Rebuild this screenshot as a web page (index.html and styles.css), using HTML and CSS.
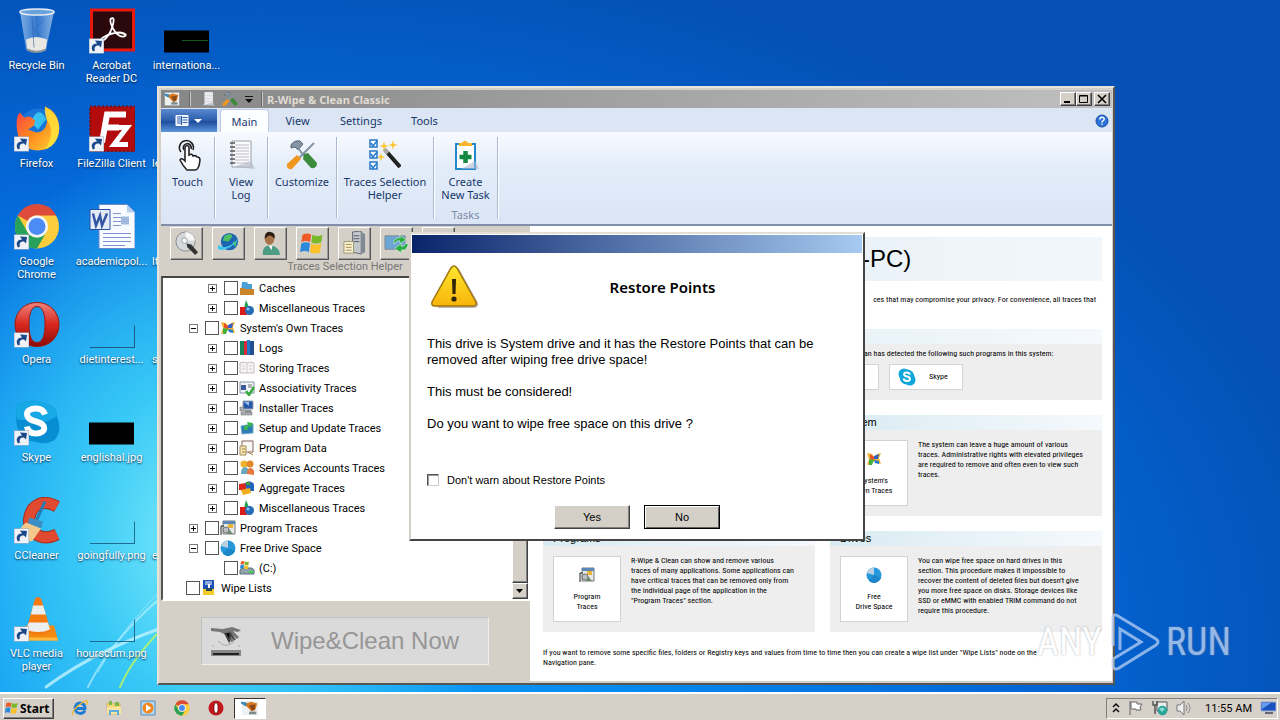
FILE: index.html
```html
<!DOCTYPE html>
<html lang="en">
<head>
<meta charset="utf-8">
<title>R-Wipe &amp; Clean Classic</title>
<link rel="stylesheet" href="styles.css">
</head>
<body>
<svg class="defs" aria-hidden="true">
  <defs>
    <linearGradient id="gFire" x1="0" y1="0" x2="1" y2="1"><stop offset="0" stop-color="#ff3b4e"/><stop offset=".5" stop-color="#ff8a1c"/><stop offset="1" stop-color="#ffd83a"/></linearGradient>
    <linearGradient id="gRed" x1="0" y1="0" x2="0" y2="1"><stop offset="0" stop-color="#f0847c"/><stop offset=".5" stop-color="#d8281e"/><stop offset="1" stop-color="#8c0a08"/></linearGradient>
    <linearGradient id="gWarn" x1="0" y1="0" x2="0" y2="1"><stop offset="0" stop-color="#ffe62e"/><stop offset="1" stop-color="#f8b40a"/></linearGradient>
    <linearGradient id="gBin" x1="0" y1="0" x2="1" y2="0"><stop offset="0" stop-color="#9cc4ea"/><stop offset=".5" stop-color="#3f7fd0"/><stop offset="1" stop-color="#a8caec"/></linearGradient>
    <symbol id="shortcut" viewBox="0 0 15 15"><path d="M0 0h15v15H0z" fill="#eef2f8" stroke="#8f9bb0" stroke-width=".8"/><path d="M4 13C1 8 4 5 8 5L6 2l7 .5L12 9 10 7C6 7 5 9 6 12z" fill="#1c4788"/></symbol>
    <symbol id="chrome" viewBox="0 0 46 46"><circle cx="23" cy="23" r="22" fill="#fccd3c"/><path d="M3.900 12A22 22 0 0 1 42.500 12H23a11 11 0 0 0-9.500 5.500z" fill="#dd4b3a"/><path d="M3.900 12A22 22 0 0 0 23 45l9.500-16.500A11 11 0 0 1 13.500 28.500z" fill="#28a15a"/><circle cx="23" cy="23" r="11" fill="#f4f4f4"/><circle cx="23" cy="23" r="8.500" fill="#4c8bf5"/></symbol>
    <symbol id="opera" viewBox="0 0 46 46"><path fill-rule="evenodd" d="M23 1C10 1 1 11 1 23s9 22 22 22 22-10 22-22S36 1 23 1zm0 4c6 0 8 8 8 18s-2 18-8 18-8-8-8-18 2-18 8-18z" fill="url(#gRed)" stroke="#a01810"/></symbol>
    <symbol id="flag" viewBox="0 0 20 20"><path d="M2 3q4-2 7 0L8 9Q5 7 1 9z" fill="#ef5a28"/><path d="M10 3q4 2 8 0l-1 6q-4 2-8 0z" fill="#79b829"/><path d="M1 10q4-2 7 0l-1 7q-3-2-7 0z" fill="#2c8ad8"/><path d="M9 10q4 2 8 0l-1 7q-4 2-8 0z" fill="#fbc02a"/></symbol>
    <symbol id="brush" viewBox="0 0 20 20"><path d="M1 2h18v16H1z" fill="#eef1f2"/><path d="M0 3l6 1 4 3-5 1-5-3z" fill="#3b8bb4"/><path d="M6 5l5-2 7 2-2 7-4 2-6-6z" fill="#d8781e"/><path d="M9 7l7-1-1 6-3 1z" fill="#8a4a18"/><path d="M9 14h8v3H9z" fill="#7d8a8c"/></symbol>
    <symbol id="misc" viewBox="0 0 16 16"><path d="M7 0l5 12H4z" fill="#18a058"/><path d="M1 7h7v8H1z" fill="#dc1a1a"/><circle cx="10.500" cy="10.500" r="4.500" fill="#246bb8"/><circle cx="9" cy="9" r="1.500" fill="#8cc4f0"/></symbol>
    <symbol id="xflag" viewBox="0 0 16 16"><path d="M1 2l5 1 2 3 3-3 4-1-2 5 2 6-5-1-2-2-3 3-4 1 2-6z" fill="#f2b233"/><path d="M4 3l4 3v3L4 8z" fill="#e8502a"/><path d="M8 5l5-2-1 5H8z" fill="#2e62c8"/><path d="M3 8l5 1-2 5H3z" fill="#43b03c"/><path d="M8 9l5 1v3l-4-1z" fill="#2478d8"/></symbol>
    <symbol id="ptrace" viewBox="0 0 16 16"><path d="M3 1h12v13H3z" fill="#e6e8ea" stroke="#777"/><path d="M3 1h12v3H3z" fill="#5d87b8"/><path d="M8 4h5v4H8z" fill="#e8b43a"/><path d="M1 6v9M1 6h3" stroke="#222" fill="none"/><circle cx="6" cy="10" r="3" fill="#b8c0c4" stroke="#777"/><path d="M9 9l4 5H7z" fill="#6f8a72"/></symbol>
    <symbol id="pie" viewBox="0 0 16 16"><circle cx="8" cy="8" r="7.500" fill="#2597da"/><path d="M8 8V.5A7.500 7.500 0 0 0 1 6z" fill="#b9cfe2"/><path d="M8 8l7 3A7.500 7.500 0 0 1 3 14z" fill="#1b86c8"/></symbol>
    <symbol id="pad" viewBox="0 0 32 32"><path d="M7 2h19v26H7z" fill="#fbfbfb" stroke="#9a9fa8"/><path d="M26 22l4 8-22-2z" fill="#b5bccb" opacity=".7"/><path d="M10 6h14M10 9h14M10 12h14M10 15h14M10 18h14M10 21h14M10 24h14" stroke="#bbc"/><path d="M5 4h5M5 8h5M5 12h5M5 16h5M5 20h5M5 24h5" stroke="#555" stroke-width="1.500"/></symbol>
    <symbol id="tools" viewBox="0 0 32 32"><path d="M5 6q3-5 9-4l3 3-5 6-3-3-4 1z" fill="#8494a4" stroke="#5c6874"/><path d="M12 9l6 8M28 4L12 20" stroke="#8494a4" stroke-width="2"/><path d="M18 15l4-1 9 10q0 6-6 5l-8-9z" fill="#3c8a3c"/><path d="M11 16l4 4-9 10q-6 1-5-5z" fill="#f0961e"/></symbol>
  </defs>
</svg>

<main class="desktop">
  <svg class="streaks" viewBox="0 0 400 200" aria-hidden="true">
    <g fill="none" stroke-linecap="round"><path d="M46 195Q100 155 180 130" stroke="#bff4ff" stroke-width="3" opacity=".8"/><path d="M88 195Q115 140 180 90" stroke="#c8f6ff" stroke-width="2" opacity=".6"/><path d="M98 180Q125 130 175 85" stroke="#a8ecff" opacity=".7"/><path d="M120 195Q135 160 175 125" stroke="#a6ee7a" stroke-width="2"/></g>
  </svg>
  <ul class="shortcuts">
    <li><svg viewBox="0 0 46 46"><path d="M6 4l6 38q10 5 20 0l8-38z" fill="url(#gBin)" opacity=".8"/><path d="M12 32q10-5 21 0l-1 9q-10 5-19 0z" fill="#e9e7e2"/><ellipse cx="23" cy="4.500" rx="17" ry="3" fill="#6aa3dc" stroke="#e8eef4" stroke-width="1.500"/><path d="M18 10l2 30M30 12l-10 10 8 8" stroke="#2d62b4" fill="none" opacity=".6"/><path d="M13 42q10 5 19 0" stroke="#8d959c" stroke-width="2" fill="none"/></svg><span>Recycle Bin</span></li>
    <li><svg viewBox="0 0 46 46"><circle cx="24" cy="22" r="19" fill="#1a74d8"/><path d="M22 8q6-4 10 6l-8 10-8-8z" fill="#37c0f0"/><path d="M3 24C2 15 3 9 6 7l4 5 6-1 5 4-1 5-6 4 8 3q9 0 11-10Q33 9 31 1q12 5 14 18c2 14-8 26-21 26S4 36 3 24z" fill="url(#gFire)"/><path d="M31 1q14 7 14 22c0 12-7 19-14 21q11-17 2-29-3-8-2-14z" fill="#ffe63c" opacity=".8"/><use href="#shortcut" x="0" y="31" width="15" height="15"/></svg><span>Firefox</span></li>
    <li><svg viewBox="0 0 46 46"><use href="#chrome"/><use href="#shortcut" x="0" y="31" width="15" height="15"/></svg><span>Google Chrome</span></li>
    <li><svg viewBox="0 0 46 46"><use href="#opera"/><use href="#shortcut" x="0" y="31" width="15" height="15"/></svg><span>Opera</span></li>
    <li><svg viewBox="0 0 46 46"><path d="M4 4q16-6 30 1 9 2 9 12 6 15-3 24-10 5-20 1Q7 42 5 33-1 17 4 4z" fill="#078ed2"/><path d="M4 4q16-6 30 1 9 2 9 12l-10 5L3 20Q1 10 4 4z" fill="#17a8e6"/><path d="M31 15q-2-6-9-6c-12 0-12 11 0 13 12 3 10 12 0 12q-8 0-9-7" fill="none" stroke="#fff" stroke-width="6"/><use href="#shortcut" x="0" y="31" width="15" height="15"/></svg><span>Skype</span></li>
    <li><svg viewBox="0 0 46 46"><path d="M43 9q-14-8-24 2-8 12 0 23 9 10 24 3" fill="none" stroke="#a82c1c" stroke-width="12"/><path d="M43 9q-14-8-24 2-8 12 0 23 9 10 24 3" fill="none" stroke="#e04a30" stroke-width="10"/><path d="M31 4L22 24" stroke="#2a7cb4" stroke-width="3"/><path d="M15 20l14 4-2 7-13-4z" fill="#3c8ec4"/><path d="M12 25l15 6-9 13-14-3q-1-9 8-16z" fill="#f4c98c"/><use href="#shortcut" x="0" y="31" width="15" height="15"/></svg><span>CCleaner</span></li>
    <li><svg viewBox="0 0 46 46"><path d="M12 30h28l4 15H8z" fill="#f28a12"/><path d="M21 3q3-3 6 0l10 33q-12 6-25 0z" fill="#f47a10"/><path d="M19 10h10l3 9H17zM15 27h19l2 7q-12 5-24 0z" fill="#eceff0"/><path d="M10 42h33l1 3H8z" fill="#ffb93c"/><use href="#shortcut" x="0" y="31" width="15" height="15"/></svg><span>VLC media player</span></li>

    <li><svg viewBox="0 0 46 46"><path d="M2.500 2.500h42v40h-42z" fill="#2a080c" stroke="#e8190c" stroke-width="3"/><path d="M22 11q4-2 2 6-3 12-11 17-4 0 1-4 8-5 17-5 9 2 4 4-6 1-11-8-4-8-2-10z" fill="none" stroke="#fff" stroke-width="1.800"/><use href="#shortcut" x="0" y="31" width="15" height="15"/></svg><span>Acrobat Reader DC</span></li>
    <li><svg viewBox="0 0 46 46"><path d="M1 1h45v45H1z" fill="#b30c0c" stroke="#7c1010" stroke-width="2" stroke-dasharray="2 2"/><path d="M13 37L18 9h19M16 22h14" fill="none" stroke="#fff" stroke-width="6"/><path d="M26 22h12L25 39h14" fill="none" stroke="#fff" stroke-width="5"/><use href="#shortcut" x="0" y="31" width="15" height="15"/></svg><span>FileZilla Client</span></li>
    <li><svg viewBox="0 0 46 46"><path d="M10 1h28l8 8v36H10z" fill="#f8fbff" stroke="#6a8ac8"/><path d="M38 1v8h8z" fill="#b7cdf0"/><path d="M14 30h28M14 34h28M14 38h28M14 42h22M24 10h8M24 14h8M24 18h8M24 22h8" stroke="#7f95c8"/><path d="M32 13h8v8h-8z" fill="#9fb8dc"/><path d="M1 6h20v20H1z" fill="#e3ebf8" stroke="#2a50a4"/><path d="M4 10l3 12 4-10 2 10 5-12" fill="none" stroke="#3454a4" stroke-width="2.500"/></svg><span>academicpol...</span></li>
    <li><svg viewBox="0 0 46 46"><path d="M45.500 24v22.500M1 46H46" stroke="#1c5c84" fill="none"/></svg><span>dietinterest...</span></li>
    <li><svg viewBox="0 0 46 46"><path d="M0 23h45v22H0z"/></svg><span>englishal.jpg</span></li>
    <li><svg viewBox="0 0 46 46"><path d="M45.500 24v22.500M1 46H46" stroke="#1c6c94" fill="none"/></svg><span>goingfully.png</span></li>
    <li><svg viewBox="0 0 46 46"><path d="M45.500 24v22.500M1 46H46" stroke="#1c6c94" fill="none"/></svg><span>hourscum.png</span></li>

    <li><svg viewBox="0 0 46 46"><path d="M0 23h45v22H0z"/><path d="M18 33h26" stroke="#0c5a20"/></svg><span>internationa...</span></li>
    <li class="partly"><span>le</span></li>
    <li class="partly"><span>lt</span></li>
    <li class="partly"><span>s</span></li>
    <li class="partly"></li>
    <li class="partly"><span>e</span></li>
  </ul>

  <section class="window">
    <header class="titlebar">
      <svg class="i16" viewBox="0 0 20 20"><use href="#brush"/></svg>
      <i class="tsep"></i>
      <svg class="i16" viewBox="0 0 32 32"><use href="#pad"/></svg>
      <svg class="i16" viewBox="0 0 32 32"><use href="#tools"/></svg>
      <svg class="more" viewBox="0 0 8 8"><path d="M0 1.500h8" stroke="#111"/><path d="M0 4h8L4 8z" fill="#111"/></svg>
      <i class="tsep last"></i>
      <h1>R-Wipe &amp; Clean Classic</h1>
      <div class="winbtns">
        <button aria-label="Minimize"><svg viewBox="0 0 10 10"><path d="M1 8h6" stroke="#000" stroke-width="2"/></svg></button><button aria-label="Maximize"><svg viewBox="0 0 10 10"><path d="M.5 1.500h8v7h-8zM.5 2h8" fill="none" stroke="#000"/></svg></button><button class="close" aria-label="Close"><svg viewBox="0 0 10 10"><path d="M1 1l8 8M9 1L1 9" stroke="#000" stroke-width="1.600"/></svg></button>
      </div>
    </header>
    <nav class="tabs">
      <button class="filebtn" aria-label="Application menu"><svg viewBox="0 0 28 14"><path d="M1 1.500h12v10H1z" fill="#e8f0fc" stroke="#fff"/><path d="M2 3h4M2 5h4M2 7h4M2 9h4M7.500 3.500h5M7.500 6h5M7.500 8.500h5" stroke="#3a68b0"/><path d="M6.500 2v9" stroke="#2a58a8"/><path d="M19 5h8l-4 4z" fill="#fff"/></svg></button>
      <button class="tab on">Main</button><button class="tab">View</button><button class="tab wide">Settings</button><button class="tab">Tools</button>
      <button class="help" aria-label="Help"><svg viewBox="0 0 14 14"><circle cx="7" cy="7" r="6" fill="#2b72d8" stroke="#1a4ca0"/><path d="M4.800 5.500q0-2.200 2.200-2.200t2.200 1.900Q9.200 6.400 7 7.600v1" fill="none" stroke="#fff" stroke-width="1.400"/><path d="M6.300 9.500h1.500v1.300H6.300z" fill="#fff"/></svg></button>
    </nav>
    <div class="ribbon">
      <div class="group g54"><button><svg viewBox="0 0 32 32"><g fill="none" stroke="#222" stroke-width="1.600"><path d="M9 13a7 7 0 1 1 12-2M12 11a4 4 0 1 1 7-1"/><path d="M13 22V8q2-3 4 0v8q3-2 4 1 3-1 4 1 3 0 3 3-1 10-5 10h-8q-4-4-7-10 1-3 5 1z" fill="#fff"/></g></svg>Touch</button></div>
      <div class="group g53"><button><svg viewBox="0 0 32 32"><use href="#pad"/></svg>View<br>Log</button></div>
      <div class="group g69"><button><svg viewBox="0 0 32 32"><use href="#tools"/></svg>Customize</button></div>
      <div class="group g97"><button><svg viewBox="0 0 32 32"><g fill="#fff" stroke="#2478c8" stroke-width="1.500"><path d="M1 1h7v7H1zM1 12h7v7H1zM1 23h7v7H1z"/><path d="M2 4l2 3 4-5M2 15l2 3 4-5M2 26l2 3 4-5" fill="none"/></g><path d="M17 12l14 16" stroke="#222" stroke-width="4"/><path d="M15 10l4 4" stroke="#aaa" stroke-width="4"/><path d="M15 2l1 4 4 1-4 1-1 4-1-4-4-1 4-1zM24 1l1 4 4 1-4 1-1 4-1-4-4-1 4-1zM12 14l1 3 3 1-3 1-1 3-1-3-3-1 3-1z" fill="#fac42c"/></svg>Traces Selection<br>Helper</button></div>
      <div class="group g64"><button><svg viewBox="0 0 32 32"><path d="M6 5h19v25H6z" fill="#fff" stroke="#2289cc" stroke-width="2"/><path d="M25 22l4 8H11z" fill="#a9b7cf" opacity=".6"/><path d="M9 7V4h3q3-5 6 0h4v3z" fill="#f8b52c"/><path d="M15.500 12v12M9.500 18h12" stroke="#128a43" stroke-width="4.500"/></svg>Create<br>New Task</button><span>Tasks</span></div>
    </div>
    <div class="body">
      <aside class="nav">
        <div class="toolbar">
          <div class="tbtns">
            <button aria-label="Scan drive"><svg viewBox="0 0 26 26"><circle cx="12" cy="11" r="10" fill="#d4d8da" stroke="#888"/><path d="M12 1a10 10 0 0 1 10 9H12z" fill="#f7f7f7"/><circle cx="11" cy="10" r="3" fill="#f4f4f4" stroke="#999"/><path d="M13 13l5 1 7 8-3 3-8-8z" fill="#333"/></svg></button>
            <button aria-label="Internet"><svg viewBox="0 0 26 26"><circle cx="14" cy="11" r="9" fill="#1c66b4"/><path d="M9 5q7-4 8 1l-4 5-6-1zM17 12l5-2-2 7z" fill="#4cc060"/><path d="M3 14q-4 8 7 5 10-3 15-14-4 8-13 11-7 2-9-2z" fill="#3dc8f0"/></svg></button>
            <button aria-label="User"><svg viewBox="0 0 26 26"><path d="M5 25q-1-10 7-10 10 0 11 10z" fill="#4d9c84"/><path d="M11 15h4l-1 5z" fill="#fff"/><ellipse cx="12" cy="8" rx="5" ry="6.500" fill="#a87448"/><path d="M7 8q0-8 6-7 6 1 4 7-3-4-6-3z" fill="#2c1c14"/></svg></button>
            <button aria-label="Windows"><svg viewBox="0 0 20 20"><use href="#flag"/></svg></button>
            <button aria-label="Computer"><svg viewBox="0 0 26 26"><path d="M11 1l9-1v24l-9-2z" fill="#c3c8cc" stroke="#667"/><path d="M20 1l4 2v19l-4 2z" fill="#7f8a92"/><path d="M12 5h6M12 8h6M12 11h6" stroke="#556"/><path d="M2 11h10v12H2z" fill="#f7f0d0" stroke="#997"/><path d="M4 14h6M4 17h6M4 20h6" stroke="#aa9050"/></svg></button>
            <button aria-label="Refresh"><svg viewBox="0 0 26 26"><path d="M1 5h21v14H1z" fill="#6ca6d4" stroke="#7e8a96"/><path d="M10 13q0-6 7-6l-1-3 7 5-6 4-1-3q-4 0-4 3zM25 13q0 7-7 7v3l-7-5 7-5v3q4 0 4-3z" fill="#2cae42" stroke="#fff" stroke-width=".5"/></svg></button>
            <button aria-label="Options"></button>
          </div>
          <p>Traces Selection Helper</p>
        </div>
        <div class="treebox">
          <ul class="tree">
            <li><ul><li><ul>
              <li><label><i class="ex plus"></i><input type="checkbox"><svg viewBox="0 0 16 16"><path d="M3 2h5l1 2h4v8H2z" fill="#4ba0d8"/><path d="M1 8h4l1 1h9v6H1z" fill="#c98428"/></svg>Caches</label></li>
              <li><label><i class="ex plus"></i><input type="checkbox"><svg viewBox="0 0 16 16"><use href="#misc"/></svg>Miscellaneous Traces</label></li>
            </ul></li>
            <li><label><i class="ex"></i><input type="checkbox"><svg viewBox="0 0 16 16"><use href="#xflag"/></svg>System's Own Traces</label><ul>
              <li><label><i class="ex plus"></i><input type="checkbox"><svg viewBox="0 0 16 16"><path d="M1 1h4v14H1z" fill="#18825a"/><path d="M5 1h3v14H5z" fill="#d82a38"/><path d="M8 0h3v15H8z" fill="#2478c8"/><path d="M11 1h4v14h-4z" fill="#205090"/></svg>Logs</label></li>
              <li><label><i class="ex plus"></i><input type="checkbox"><svg viewBox="0 0 16 16"><path d="M1 3q4-2 7 0 4-2 7 0v10H1z" fill="#f6f4f4" stroke="#c4bcc0"/><path d="M8 3v10M3 6h3M10 6h3M3 9h3M10 9h3" stroke="#ccc"/></svg>Storing Traces</label></li>
              <li><label><i class="ex plus"></i><input type="checkbox"><svg viewBox="0 0 16 16"><path d="M1 2h14v11H1z" fill="#f1f4f8" stroke="#8794a8"/><path d="M2 5h5v5H2z" fill="#3b5c98"/><path d="M9 5h4M9 7h4" stroke="#777"/><path d="M7 11l3 4 5-8" fill="none" stroke="#35ac3b" stroke-width="2.500"/></svg>Associativity Traces</label></li>
              <li><label><i class="ex plus"></i><input type="checkbox"><svg viewBox="0 0 16 16"><path d="M4 1h10v8H4z" fill="#2656a8" stroke="#98a4b4"/><path d="M5 2h5v4z" fill="#97bdf0"/><path d="M1 7h4v4H1zM6 10h6v2H6zM2 12h11v3H2z" fill="#aab0b6" stroke="#666" stroke-width=".5"/></svg>Installer Traces</label></li>
              <li><label><i class="ex plus"></i><input type="checkbox"><svg viewBox="0 0 16 16"><path d="M2 6l12-2v9L3 14z" fill="#2a7eb4" stroke="#6ba8d0"/><path d="M5 10V6l4-1-1-3 6 1-2 4-2-1-2 4z" fill="#38b54c"/></svg>Setup and Update Traces</label></li>
              <li><label><i class="ex plus"></i><input type="checkbox"><svg viewBox="0 0 16 16"><path d="M3 1h11v11H3z" fill="#faf8f4" stroke="#81625c"/><path d="M1 6h6v9H1z" fill="#f6e9b8" stroke="#a28b54"/><path d="M3 9h3M3 12h3M9 12l5 3" stroke="#a87434"/></svg>Program Data</label></li>
              <li><label><i class="ex plus"></i><input type="checkbox"><svg viewBox="0 0 16 16"><circle cx="5" cy="4" r="3.500" fill="#ebb32e"/><circle cx="11" cy="4" r="3.500" fill="#e6892b"/><path d="M2 14q0-7 4-7t4 7z" fill="#67a8bc"/><path d="M8 14q0-7 4-6t3 7z" fill="#e87840"/></svg>Services Accounts Traces</label></li>
              <li><label><i class="ex plus"></i><input type="checkbox"><svg viewBox="0 0 16 16"><path d="M0 4l7-1v7H0z" fill="#dc2818"/><path d="M6 3q5-4 9 1v7H8z" fill="#2065b8"/><path d="M2 10l9-2 1 5-8 2z" fill="#f0ac1c"/><path d="M7 2h4v3H7z" fill="#4c9b38"/></svg>Aggregate Traces</label></li>
              <li><label><i class="ex plus"></i><input type="checkbox"><svg viewBox="0 0 16 16"><use href="#misc"/></svg>Miscellaneous Traces</label></li>
            </ul></li>
            <li><label><i class="ex plus"></i><input type="checkbox"><svg viewBox="0 0 16 16"><use href="#ptrace"/></svg>Program Traces</label></li>
            <li><label><i class="ex"></i><input type="checkbox"><svg viewBox="0 0 16 16"><use href="#pie"/></svg>Free Drive Space</label><ul>
              <li><label><i class="ex none"></i><input type="checkbox"><svg viewBox="0 0 16 16"><path d="M1 10l2-2h10l2 2v4H1z" fill="#8ea4a6" stroke="#56707c"/><path d="M10 12h4" stroke="#3bd04e" stroke-width="2"/><use href="#flag" x="1" y="0" width="10" height="10"/></svg>(C:)</label></li>
            </ul></li></ul></li>
            <li><label><i class="ex none"></i><input type="checkbox"><svg viewBox="0 0 16 16"><path d="M2 0h11v15H2z" fill="#1c52b8"/><path d="M4 2h7M4 4h7" stroke="#fff"/><path d="M7 4h2v7H7z" fill="#fff"/><path d="M2 9h11v6H2z" fill="#f4ca24"/><path d="M5 8h6v3H5z" fill="#28485c"/></svg>Wipe Lists</label></li>
          </ul>
          <div class="scroll"><div class="thumb"></div><button aria-label="Scroll down"><svg viewBox="0 0 8 4"><path d="M0 0h7L3.500 4z"/></svg></button></div>
        </div>
        <div class="action">
          <button class="wipe" disabled><svg viewBox="0 0 34 34"><path d="M2 4l12 1 9-2 9 3-3 2-5-1 6 6-2 2-6-5 3 7-3 1-5-7-6-3L2 7z" fill="#777"/><path d="M16 9l4 8 2-8M20 8l6 8" stroke="#444" stroke-width="2"/><path d="M9 17q7 8 16 1M3 22h2M29 22h2" fill="none" stroke="#aaa"/><path d="M2 26h30v6H2z" fill="#888"/><path d="M4 29h26v2H4z" fill="#222"/></svg><span>Wipe&amp;Clean Now</span></button>
        </div>
      </aside>
      <article class="page">
        <h2>-PC)</h2>
        <p class="intro">ces that may compromise your privacy. For convenience, all traces that</p>
        <section class="block">
          <h3></h3>
          <div class="detected">
            <p>an has detected the following such programs in this system:</p>
            <div class="progs"><div class="prog"></div><div class="prog"><svg viewBox="0 0 18 18"><circle cx="6" cy="6" r="5.500" fill="#12a5dc"/><circle cx="12" cy="12" r="5.500" fill="#12a5dc"/><circle cx="9" cy="9" r="7.500" fill="#12a5dc"/><path d="M12 6.500q-1-2-3-2c-4 0-4 3.500 0 4s4 4.500 0 4.500q-3 0-3.500-2.500" fill="none" stroke="#fff" stroke-width="1.800"/></svg><span>Skype</span></div></div>
          </div>
        </section>
        <div class="cards">
          <section class="block second"><h3>System</h3><div class="info"><a class="card" href="#system"><svg viewBox="0 0 16 16"><use href="#xflag"/></svg>System's<br>Own Traces</a><p>The system can leave a huge amount of various<br>traces. Administrative rights with elevated privileges<br>are required to remove and often even to view such<br>traces.</p></div></section>
          <section class="block"><h3>Programs</h3><div class="info"><a class="card" href="#programs"><svg viewBox="0 0 16 16"><use href="#ptrace"/></svg>Program<br>Traces</a><p>R-Wipe &amp; Clean can show and remove various<br>traces of many applications. Some applications can<br>have critical traces that can be removed only from<br>the individual page of the application in the<br>"Program Traces" section.</p></div></section>
          <section class="block"><h3>Drives</h3><div class="info"><a class="card" href="#drives"><svg viewBox="0 0 16 16"><use href="#pie"/></svg>Free<br>Drive Space</a><p>You can wipe free space on hard drives in this<br>section. This procedure makes it impossible to<br>recover the content of deleted files but doesn't give<br>you more free space on disks. Storage devices like<br>SSD or eMMC with enabled TRIM command do not<br>require this procedure.</p></div></section>
        </div>
        <p class="foot">If you want to remove some specific files, folders or Registry keys and values from time to time then you can create a wipe list under "Wipe Lists" node on the<br>Navigation pane.</p>
      </article>
    </div>
  </section>

  <form class="dialog" role="dialog" aria-labelledby="dlg-title">
    <div class="dlg-bar"></div>
    <div class="dlg-head"><svg viewBox="0 0 50 44"><path d="M28 4l19 34q1 4-3 4H8" fill="none" stroke="#bbb" stroke-width="2"/><path d="M21 3q3-4 6 0l19 34q1 4-3 4H5q-4 0-3-4z" fill="url(#gWarn)" stroke="#a07410" stroke-width="1.500"/><path d="M22 14h4l-.5 15h-3z" fill="#2e2408"/><circle cx="24" cy="34" r="2.600" fill="#2e2408"/></svg><h2 id="dlg-title">Restore Points</h2></div>
    <div class="dlg-text"><p>This drive is System drive and it has the Restore Points that can be<br>removed after wiping free drive space!</p><p>This must be considered!</p><p>Do you want to wipe free space on this drive ?</p></div>
    <label class="warn"><input type="checkbox">Don't warn about Restore Points</label>
    <div class="dlg-btns"><button type="button">Yes</button><button type="button" class="def">No</button></div>
  </form>

  <div class="mark"><span>ANY</span><svg viewBox="0 0 56 64"><path d="M7 36V8q0-5 5-2l38 23q4 3 0 6L13 58q-5 3-6-2v-7l28-17L14 19v21" fill="none" stroke="#b9d2f4" stroke-width="3"/></svg><span>RUN</span></div>
</main>

<footer class="taskbar">
  <button class="start"><svg viewBox="0 0 20 20"><use href="#flag"/></svg>Start</button>
  <div class="quick">
    <button aria-label="Internet Explorer"><svg viewBox="0 0 16 16"><path d="M13 10.500Q11.500 13.500 8 13.500q-5-1-5-5.500 1-5 5-5 5 .5 5 5.500H4" fill="none" stroke="#1f7cd4" stroke-width="2.800"/><path d="M1 15q-2-3 5-9t9-5q1 1-1 4" fill="none" stroke="#f0b82c" stroke-width="1.300"/></svg></button>
    <button aria-label="Explorer"><svg viewBox="0 0 16 16"><path d="M1 3h5l1 1h7v10H1z" fill="#f4d778" stroke="#c8a84c" stroke-width=".6"/><path d="M3 1h3v4H3zM9 2h4v4H9z" fill="#7ab848"/><path d="M1 7h14v7H1z" fill="#f8e6a0"/><path d="M3 15v-5h10v5h-2v-3H5v3z" fill="#62ace0"/></svg></button>
    <button aria-label="Media Player"><svg viewBox="0 0 16 16"><path d="M1 1h14v14H1z" fill="#b6d8f0" stroke="#4a90c8"/><circle cx="8" cy="8" r="5.500" fill="#f0861c"/><path d="M6 4.500l5.500 3.500L6 11.500z" fill="#fff"/></svg></button>
    <button aria-label="Chrome"><svg viewBox="0 0 46 46"><use href="#chrome"/></svg></button>
    <button aria-label="Opera"><svg viewBox="0 0 16 16"><circle cx="8" cy="8" r="7.500" fill="#c4181c"/><ellipse cx="8" cy="8" rx="2.200" ry="5.300" fill="#fff" stroke="#7c0c0c"/></svg></button>
  </div>
  <button class="task" aria-label="R-Wipe &amp; Clean Classic"><svg viewBox="0 0 20 20"><use href="#brush"/></svg></button>
  <div class="tray">
    <svg class="chev" viewBox="0 0 8 10"><path d="M1 4l3-3 3 3M1 9l3-3 3 3" fill="none" stroke="#111" stroke-width="1.500"/></svg>
    <svg viewBox="0 0 16 16"><path d="M2 1v14M3 2h6v2h5l-2 3 1 3H8V9H3z" fill="#fff" stroke="#666"/></svg>
    <svg viewBox="0 0 16 16"><path d="M5 2h10v9H5z" fill="#e9eef0" stroke="#555"/><path d="M1 1v4h4V1M3 5v9" fill="none" stroke="#555" stroke-width="1.500"/><circle cx="10.500" cy="10.500" r="4.800" fill="#2aa39b"/><path d="M7 9q3-3 6 0l-3 3z" fill="#80dcd0"/></svg>
    <svg viewBox="0 0 16 16"><path d="M1 5h3l4-4v14l-4-4H1z" fill="#eee" stroke="#777"/><path d="M10 5q2 3 0 6M12 3q4 5 0 10" fill="none" stroke="#888"/></svg>
    <time>11:55 AM</time>
    <svg viewBox="0 0 16 16"><path d="M1 2h15v9H1z" fill="#1a50c0" stroke="#9ab0d8"/><path d="M2 3h9L2 9z" fill="#6a9cec"/><path d="M5 13h8" stroke="#667" stroke-width="2"/></svg>
  </div>
</footer>
</body>
</html>
```
FILE: styles.css
```css
* { box-sizing: border-box; }
html, body { height: 100%; margin: 0; }
body {
  display: flex;
  flex-direction: column;
  overflow: hidden;
  font: 11px/13px Roboto, "Noto Sans", sans-serif;
  color: #000;
}
h1, h2, h3, p, ul { margin: 0; padding: 0; font-weight: normal; }
ul { list-style: none; }
svg { display: block; flex: none; }
button { font: inherit; color: inherit; padding: 0; border: 0; background: none; }
input { margin: 0; }
.defs { position: absolute; width: 0; height: 0; }

/* Desktop */
.desktop {
  position: relative;
  flex: 1;
  overflow: hidden;
  background:
    radial-gradient(ellipse 300px 400px at 200px 540px, #7cecfa 0, #38c8f6 40%, rgba(20, 160, 240, 0) 100%),
    radial-gradient(ellipse 1100px 700px at 260px 640px, #12a0f6 0, #068af0 35%, #0468d8 68%, #0450b4 100%);
}
.streaks { position: absolute; left: 0; bottom: 0; width: 400px; height: 200px; }
.shortcuts {
  position: relative;
  display: grid;
  grid-auto-flow: column;
  grid-template-rows: repeat(7, 98px);
  grid-auto-columns: 75px;
  padding-top: 7px;
  margin-left: -1px;
  color: #fff;
  text-align: center;
  text-shadow: 0 1px 2px #024;
}
.shortcuts li { display: flex; flex-direction: column; align-items: center; gap: 5px; white-space: nowrap; }
.shortcuts li:nth-child(3) span, .shortcuts li:nth-child(7) span, .shortcuts li:nth-child(8) span { white-space: normal; }
.shortcuts svg { width: 46px; height: 47px; }
.shortcuts .partly { padding: 52px 0 0 3px; align-items: flex-start; }

/* Main window */
.window {
  position: absolute;
  inset: 86px 165px 7px 157px;
  display: flex;
  flex-direction: column;
  padding: 2px 1px 2px 2px;
  background: #d4d0c8;
  border: 2px solid;
  border-color: #e8e4dc #555 #555 #e8e4dc;
  font-family: "Noto Sans", "Open Sans", sans-serif;
}
.titlebar {
  display: flex;
  align-items: center;
  height: 18px;
  padding: 0 2px;
  background: linear-gradient(90deg, #868686, #c0c0c0);
}
.i16 { width: 18px; height: 16px; }
.tsep { width: 2px; height: 14px; margin: 0 8px; border-left: 1px solid #666; border-right: 1px solid #ccc; }
.titlebar .i16 + .i16 { margin-left: 4px; }
.more { width: 8px; height: 8px; margin-left: 6px; }
.titlebar h1 { flex: 1; padding-top: 1px; font: bold 11px/18px "Noto Sans", sans-serif; color: #e0dcd4; }
.tsep.last { margin-right: 4px; }
.winbtns { display: flex; }
.winbtns button, .scroll button, .thumb, .start {
  background: #d4d0c8;
  border: 1px solid;
  border-color: #fff #404040 #404040 #fff;
  box-shadow: inset -1px -1px #808080;
}
.winbtns button { display: grid; place-items: center; width: 16px; height: 14px; }
.winbtns svg { width: 10px; height: 10px; }
.winbtns .close { margin-left: 2px; }

.tabs { display: flex; height: 24px; padding-top: 1px; background: #dbe5f4; color: #17376b; }
.filebtn { display: grid; place-items: center; width: 56px; background: linear-gradient(#5a8ad0, #2a5cab 50%, #1d4c9c 55%, #5c97dc); }
.filebtn svg { width: 28px; height: 14px; }
.tab { width: 57px; }
.tab.on { width: 49px; margin-left: 3px; background: #fdfeff; border: 1px solid #bccce4; border-bottom: 0; border-radius: 3px 3px 0 0; }
.tab.wide { width: 70px; }
.help { margin: 0 3px 0 auto; }
.help svg { width: 14px; height: 14px; }

.ribbon {
  display: flex;
  height: 94px;
  padding-top: 5px;
  background: linear-gradient(#f7faff, #e3ecf9 40%, #dae5f5);
  border-bottom: 2px solid #7f8fa9;
  color: #17376b;
}
.group { position: relative; display: flex; flex-direction: column; align-items: center; justify-content: space-between; height: 81px; border-right: 1px solid #a6b8d2; box-shadow: 1px 0 #fff; }
.group button { padding-top: 2px; }
.group svg { width: 32px; height: 32px; margin: 0 auto 4px; }
.group span { position: absolute; bottom: -3px; color: #7c8da8; }
.g54 { width: 54px; } .g53 { width: 53px; } .g69 { width: 69px; } .g97 { width: 97px; } .g64 { width: 64px; }

.body { flex: 1; display: flex; min-height: 0; }
.nav { flex: 0 0 369px; display: flex; flex-direction: column; }
.toolbar { height: 50px; padding: 1px 0 0 9px; }
.tbtns { display: flex; gap: 9px; }
.tbtns button {
  display: grid;
  place-items: center;
  width: 33px;
  height: 33px;
  border: 1px solid;
  border-color: #fff #555 #555 #fff;
  box-shadow: inset -1px -1px #999;
}
.tbtns svg { width: 25px; height: 25px; }
.toolbar p { padding-right: 10px; text-align: center; color: #777; font-family: Roboto, "Noto Sans", sans-serif; }
.treebox { flex: 1; display: flex; min-height: 0; overflow: hidden; background: #fff; border: 2px solid; border-color: #444 #fff #fff #555; }
.tree { flex: 1; padding: 0 0 0 7px; font-family: Roboto, "Noto Sans", sans-serif; }
.tree ul { padding-left: 19px; }
.tree label { display: flex; align-items: center; height: 20px; white-space: nowrap; }
.tree svg { width: 16px; height: 16px; margin: 0 4px 0 1px; }
.ex { width: 9px; height: 9px; margin-right: 7px; border: 1px solid #777; background: linear-gradient(#000, #000) center / 5px 1px no-repeat; }
.ex.plus { background: linear-gradient(#000, #000) center / 5px 1px no-repeat, linear-gradient(#000, #000) center / 1px 5px no-repeat; }
.ex.none { visibility: hidden; }
.tree input { appearance: none; width: 14px; height: 14px; border: 1px solid #555; background: #fff; }
.scroll { display: flex; flex-direction: column; width: 16px; }
.thumb { flex: 1; }
.scroll button { display: grid; place-items: center; height: 16px; }
.scroll svg { width: 8px; height: 4px; }
.action { height: 80px; padding: 16px 41px 16px 40px; }
.wipe { display: flex; align-items: center; width: 100%; height: 48px; padding: 0 7px; gap: 28px; background: #dadada; border: 1px solid; border-color: #c2c2c2 #eee #eee #c2c2c2; color: #969696; font: 24px "Liberation Sans", Arial, sans-serif; white-space: nowrap; }
.wipe svg { width: 34px; height: 34px; }

/* Start page */
.page { flex: 1; min-width: 0; padding: 11px 10px 0 13px; background: #fff; font: 8px/10px "Roboto Condensed", "Liberation Sans", sans-serif; overflow: hidden; }
.page h2 { padding-left: 319px; font: 24px/44px "Liberation Sans", Arial, sans-serif; background: linear-gradient(90deg, #e0edf5, #f2f7fc); }
.intro { padding: 14px 6px 0 0; text-align: right; }
.block h3 { height: 15px; padding-left: 10px; font: 11px/15px "Liberation Sans", Arial, sans-serif; background: linear-gradient(90deg, #d9ebf2, #f5f9fd); }
.block > div { background: #eee; }
.intro + .block { margin-top: 24px; }
.detected { height: 56px; padding: 5px 0 0 321px; }
.progs { display: flex; gap: 10px; margin: 5px 0 0 -59px; }
.prog { display: flex; align-items: center; gap: 13px; width: 74px; height: 26px; padding-left: 8px; background: #fff; border: 1px solid #d4d4d4; }
.prog svg { width: 18px; height: 18px; }
.cards { display: grid; grid-template-columns: repeat(2, minmax(0, 1fr)); gap: 15px; margin-top: 15px; }
.second { grid-column: 2; }
.info { display: flex; gap: 10px; min-height: 86px; padding: 10px; }
.info p { white-space: nowrap; }
.card { flex: none; width: 68px; height: 66px; padding-top: 10px; background: #fff; border: 1px solid #d2d2d2; color: #000; text-align: center; text-decoration: none; }
.card svg { width: 16px; height: 16px; margin: 0 auto 9px; }
.foot { margin-top: 16px; white-space: nowrap; }

/* Message dialog */
.dialog {
  position: absolute;
  top: 232px;
  left: 409px;
  right: 415px;
  padding: 1px;
  background: #fff;
  border: 2px solid;
  border-color: #e2ded8 #444 #444 #d4d0c8;
  font: 13px/16px "Liberation Sans", Arial, sans-serif;
}
.dlg-bar { height: 18px; background: linear-gradient(90deg, #0a246a, #a6caf0); }
.dlg-head { display: flex; align-items: center; height: 68px; padding: 0 17px 0 18px; }
.dlg-head svg { width: 50px; height: 44px; }
.dlg-head h2 { flex: 1; text-align: center; font: 600 15px/20px "Noto Sans", sans-serif; }
.dlg-text { display: grid; gap: 16px; padding: 15px 15px 0; white-space: nowrap; }
.warn { display: flex; align-items: center; gap: 8px; padding: 40px 15px 0; font-size: 11px; }
.warn input { appearance: none; width: 12px; height: 12px; border: 1px solid; border-color: #555 #ccc #ccc #555; box-shadow: inset 1px 1px #999; }
.dlg-btns { display: flex; justify-content: center; gap: 14px; padding: 17px 0 9px; }
.dlg-btns button { width: 76px; height: 24px; background: #d4d0c8; border: 1px solid; border-color: #fff #404040 #404040 #fff; box-shadow: inset -1px -1px #808080; font-size: 11px; }
.dlg-btns .def { border-color: #000; box-shadow: inset 1px 1px #fff, inset -1px -1px #606060; }

/* Watermark */
.mark { position: absolute; right: 49px; bottom: 18px; display: flex; align-items: center; gap: 4px; color: #c4d8f4; font: 38px/64px "Roboto Condensed", "Liberation Sans", sans-serif; opacity: .75; text-shadow: 0 0 2px #889; pointer-events: none; }
.mark svg { width: 56px; height: 64px; }
.mark span:first-child { color: #fff; }

/* Taskbar */
.taskbar { display: flex; align-items: center; height: 28px; padding: 2px 2px 0 3px; background: #d6d0c8; border-top: 2px solid #fff; }
.start { display: flex; align-items: center; width: 51px; height: 21px; padding-left: 1px; font: bold 12px "Noto Sans", sans-serif; }
.start svg { width: 14px; height: 16px; margin-right: 1px; }
.quick { display: flex; gap: 18px; margin: 0 11px 0 18px; }
.quick svg { width: 16px; height: 16px; }
.task { display: grid; place-items: center; width: 32px; height: 21px; margin-left: -1px; background: #fff; border: 1px solid; border-color: #333 #fff #fff #333; }
.task svg { width: 18px; height: 18px; }
.tray { display: flex; align-items: center; gap: 8px; height: 21px; margin-left: auto; padding: 0 1px 0 5px; border: 1px solid; border-color: #808080 #fff #fff #808080; }
.tray svg { width: 16px; height: 16px; }
.tray .chev { width: 8px; height: 10px; }
.tray time { margin-left: 5px; }
```
